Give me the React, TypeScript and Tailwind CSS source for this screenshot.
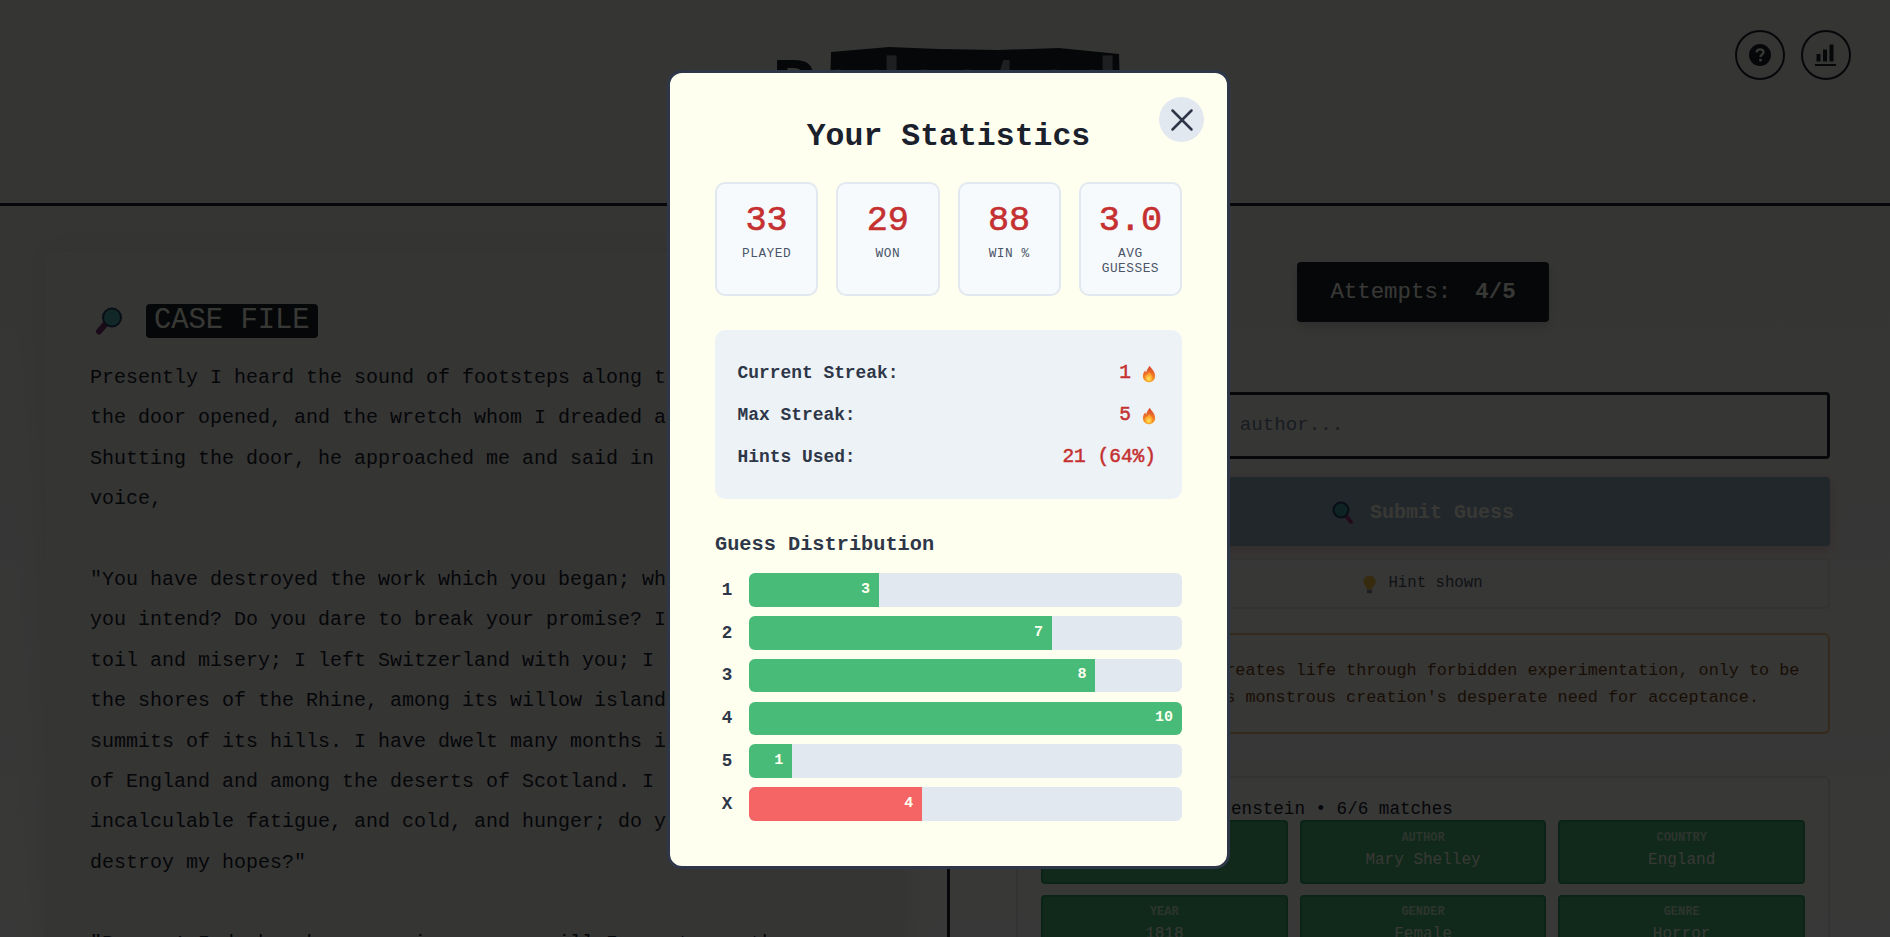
import React from 'react';
import { X } from 'lucide-react';

const mono = 'font-["Liberation_Mono","Courier_New",monospace]';

const Flame = () => (
  <svg width="14" height="18" viewBox="0 0 16 20" className="inline-block">
    <defs>
      <linearGradient id="flameOuter" x1="0" y1="0" x2="0" y2="1">
        <stop offset="0" stopColor="#d9432f" />
        <stop offset="0.6" stopColor="#f07a2a" />
        <stop offset="1" stopColor="#f9a825" />
      </linearGradient>
      <radialGradient id="flameInner" cx="0.5" cy="0.75" r="0.65">
        <stop offset="0" stopColor="#ffe25a" />
        <stop offset="1" stopColor="#fb8f1f" />
      </radialGradient>
    </defs>
    <path d="M9 0.5c.6 2.200 2.200 3.200 3.600 5.200 1.600 2.300 2.600 4.600 2.400 7.200-.3 4-3.400 6.600-7 6.600s-7-2.600-7-6.800c0-2.600 1-4.800 2.600-6.600.2 1 .5 1.600 1.200 2.200C5.400 5 7 3 9 .5z" fill="url(#flameOuter)" />
    <path d="M8.500 7.500c.5 1.600 2 2.600 2.900 4.300 1 2 .6 4.200-.9 5.500-.8.700-1.700 1-2.700 1-2.300 0-4.300-1.600-4.300-4.300 0-1.500.6-2.800 1.600-3.800.2.600.4 1 .8 1.300.3-1.600 1.200-2.800 2.600-4z" fill="url(#flameInner)" />
  </svg>
);

// lens on the upper right, handle to the lower left
const MagnifierLeft = () => (
  <svg width="27" height="28" viewBox="0 0 27 28">
    <path d="M10 17.500L4 24.500" stroke="#7a2f6d" strokeWidth="6" strokeLinecap="round" />
    <circle cx="17" cy="10.500" r="9" fill="#4fb3b7" stroke="#26415f" strokeWidth="2" />
  </svg>
);

// lens on the upper left, handle to the lower right
const MagnifierRight = () => (
  <svg width="22" height="24" viewBox="0 0 22 24">
    <path d="M14 15l5 6" stroke="#a03a78" strokeWidth="4" strokeLinecap="round" />
    <circle cx="9" cy="9" r="7.500" fill="#3f9ea3" stroke="#26415f" strokeWidth="2" />
  </svg>
);

const Bulb = () => (
  <svg width="13" height="19" viewBox="0 0 14 20">
    <path d="M7 .5a6.500 6.500 0 0 0-3.500 12l.6 2.500h5.800l.6-2.500A6.500 6.500 0 0 0 7 .5z" fill="#f6c244" />
    <rect x="4.200" y="15.500" width="5.600" height="4" rx="1" fill="#8a8f98" />
  </svg>
);

const HelpIcon = () => (
  <svg width="24" height="24" viewBox="0 0 24 24">
    <circle cx="12" cy="12" r="11" fill="currentColor" />
    <path d="M8.600 9.300c.2-1.900 1.600-3 3.500-3 2 0 3.400 1.200 3.400 2.800 0 2.500-3 2.500-3 4.900" fill="none" stroke="#fffff0" strokeWidth="2.300" />
    <rect x="11.200" y="15.800" width="2.600" height="2.600" rx="0.600" fill="#fffff0" />
  </svg>
);

const ChartIcon = () => (
  <svg width="22" height="22" viewBox="0 0 22 22" fill="currentColor">
    <rect x="1.500" y="10" width="4" height="7.500" />
    <rect x="8" y="5.500" width="4" height="12" />
    <rect x="14.500" y="0.500" width="4" height="17" />
    <rect x="0" y="20" width="21" height="2" />
  </svg>
);

const statBoxes = [
  { value: '33', label: 'PLAYED' },
  { value: '29', label: 'WON' },
  { value: '88', label: 'WIN %' },
  { value: '3.0', label: 'AVG GUESSES' },
];

const distribution = [
  { key: '1', count: 3, pct: 30 },
  { key: '2', count: 7, pct: 70 },
  { key: '3', count: 8, pct: 80 },
  { key: '4', count: 10, pct: 100 },
  { key: '5', count: 1, pct: 10 },
  { key: 'X', count: 4, pct: 40, fail: true },
];

const passage = `Presently I heard the sound of footsteps along the passage;
the door opened, and the wretch whom I dreaded appeared.
Shutting the door, he approached me and said in a smothered
voice,

"You have destroyed the work which you began; what is it that
you intend? Do you dare to break your promise? I have endured
toil and misery; I left Switzerland with you; I crept along
the shores of the Rhine, among its willow islands and over the
summits of its hills. I have dwelt many months in the heaths
of England and among the deserts of Scotland. I have endured
incalculable fatigue, and cold, and hunger; do you dare
destroy my hopes?"

"Begone! I do break my promise; never will I create another
like yourself, equal in deformity and wickedness."`;

const clues = [
  { label: 'TITLE', value: 'Frankenstein' },
  { label: 'AUTHOR', value: 'Mary Shelley' },
  { label: 'COUNTRY', value: 'England' },
  { label: 'YEAR', value: '1818' },
  { label: 'GENDER', value: 'Female' },
  { label: 'GENRE', value: 'Horror' },
];

const StatsModal = () => (
  <div className="fixed inset-0 z-50 flex items-center justify-center bg-[rgba(0,0,0,0.78)]">
    <div className={`relative mt-[2px] ml-[7px] w-[563px] rounded-[15px] border-[3px] border-[#2d3748] bg-[#fffff0] px-[45px] pt-[46px] pb-[45px] ${mono}`}>
      <button className="absolute top-[24px] right-[23px] flex h-[45px] w-[45px] items-center justify-center rounded-full bg-[#e2e8f0] text-[#2d3748]">
        <X size={38} strokeWidth={1.6} />
      </button>
      <h2 className="text-center text-[31.500px] leading-[36px] font-bold text-[#1a202c]">Your Statistics</h2>

      <div className="mt-[27px] grid grid-cols-4 gap-[18px]">
        {statBoxes.map((s) => (
          <div key={s.label} className="h-[114px] rounded-[10px] border-2 border-[#e2e8f0] bg-[#f7fafc] px-2 pt-[19px] text-center">
            <div className="text-[35.200px] leading-[36px] text-[#c53030] [-webkit-text-stroke:0.6px_#c53030]">{s.value}</div>
            <div className="mt-[7px] text-[12.800px] leading-[15px] tracking-[0.5px] text-[#4a5568]">{s.label}</div>
          </div>
        ))}
      </div>

      <div className="mt-[34px] flex flex-col gap-[21px] rounded-[10px] bg-[#edf2f7] pt-[33px] pr-[26px] pb-[31px] pl-[22.500px]">
        {[
          { label: 'Current Streak:', value: '1', flame: true },
          { label: 'Max Streak:', value: '5', flame: true },
          { label: 'Hints Used:', value: '21 (64%)', flame: false },
        ].map((row) => (
          <div key={row.label} className="flex h-[21px] items-center justify-between">
            <span className="text-[17.900px] font-bold text-[#2d3748]">{row.label}</span>
            <span className="flex items-center gap-[11px] text-[19.500px] text-[#c53030] [-webkit-text-stroke:0.5px_#c53030]">
              {row.value}
              {row.flame && <Flame />}
            </span>
          </div>
        ))}
      </div>

      <h3 className="mt-[34px] text-[20.300px] leading-[24px] font-bold text-[#2d3748]">Guess Distribution</h3>
      <div className="mt-[16px] flex flex-col gap-[9.200px]">
        {distribution.map((d) => (
          <div key={d.key} className="flex items-center gap-[10px]">
            <span className="w-[24px] text-center text-[17.600px] font-bold text-[#2d3748]">{d.key}</span>
            <div className="h-[33.600px] flex-1 overflow-hidden rounded-[6px] bg-[#e2e8f0]">
              <div
                className={`flex h-full items-center justify-end pr-[9px] text-[15px] font-bold text-[#fffff0] ${d.fail ? 'bg-[#f56565]' : 'bg-[#48bb78]'}`}
                style={{ width: `${d.pct}%` }}
              >
                {d.count}
              </div>
            </div>
          </div>
        ))}
      </div>
    </div>
  </div>
);

export default function App() {
  return (
    <div className={`h-[937px] overflow-hidden bg-[#f0f0ec] text-[#1a202c] ${mono}`}>
      <header className="relative h-[206px] border-b-[3px] border-[#1a202c] pt-[49px] text-center">
        <h1 className="text-[72px] leading-[80px] font-bold">
          R
          <span className="relative inline-block">
            {/* marker scribble over the hidden part of the title */}
            <svg width="292" height="80" viewBox="0 0 292 80" className="absolute -top-[3px] left-[14px]">
              <path d="M2 6L60 1L110 3L170 4L230 2L290 8L292 80L0 80Z" fill="#1a202c" />
            </svg>
            <span className="relative text-[#8a8f96]">edacted</span>
          </span>
        </h1>
        <div className="absolute top-[30px] right-[39px] flex gap-[16px]">
          <button className="flex h-[50px] w-[50px] items-center justify-center rounded-full border-2 border-[#1a202c]">
            <HelpIcon />
          </button>
          <button className="flex h-[50px] w-[50px] items-center justify-center rounded-full border-2 border-[#1a202c]">
            <ChartIcon />
          </button>
        </div>
      </header>

      <main className="flex h-[731px] items-start bg-linear-to-b from-[#f0f0ec] to-[#fffffc]">
        <section className="ml-[45px] mt-[46px] h-[700px] w-[860px] shrink-0 bg-[#f2f2ee] pl-[45px] pt-[52px] shadow-[0_0_30px_rgba(0,0,0,0.08)]">
          <div className="flex items-center gap-[24px]">
            <span className="ml-[5px]">
              <MagnifierLeft />
            </span>
            <span className="rounded-[4px] bg-[#1a202c] px-[8px] py-[3px] text-[28.800px] leading-[28px] text-[#fffff0]">CASE FILE</span>
          </div>
          <p className="mt-[20px] whitespace-pre-line text-[20px] leading-[40.400px] text-[#1a202c]">{passage}</p>
        </section>

        <div className="ml-[42px] h-[731px] w-[3px] bg-[#1a202c]" />

        <section className="ml-[66px] flex w-[814px] shrink-0 flex-col">
          <div className="mt-[56px] flex justify-center">
            <div className="flex h-[60px] w-[252px] items-center justify-center rounded-[4px] bg-[#1a202c] pt-[1px] text-[22.400px] text-[#fffff0] shadow-[0_4px_10px_rgba(0,0,0,0.15)]">
              Attempts:<span className="ml-[24px] font-bold">4/5</span>
            </div>
          </div>

          <div className="mt-[70px] flex h-[67px] items-center rounded-[4px] border-[3px] border-[#1a202c] pl-[25px] text-[19.200px] text-[#718096]">
            Enter a title or author...
          </div>

          <button className="mt-[18px] flex h-[69px] items-center justify-center gap-[16px] rounded-[4px] bg-[#9bb1c3] pt-[3px] text-[20px] font-bold text-[#fffff0] shadow-[0_4px_12px_rgba(197,48,48,0.25)]">
            <MagnifierRight />
            Submit Guess
          </button>

          <div className="mt-[12px] flex h-[51px] items-center justify-center gap-[12px] rounded-[4px] border-2 border-[#e6e6dc] pt-[1px] text-[15.700px] text-[#4a5568]">
            <Bulb />
            Hint shown
          </div>

          <div className="mt-[24px] h-[101px] rounded-[6px] border-2 border-[#ecbf7a] pt-[22px] pl-[26px] text-[16.800px] leading-[27px] text-[#744210]">
            A driven student creates life through forbidden experimentation, only to be
            <br />
            then haunted by his monstrous creation's desperate need for acceptance.
          </div>

          <div className="mt-[42px] rounded-[6px] border-2 border-[#e6e6ee] px-[23px] pt-[21px]">
            <div className="text-[17.600px] leading-[20px]">Attempt 4/5: Frankenstein • 6/6 matches</div>
            <div className="mt-[1px] grid grid-cols-3 gap-x-[12px] gap-y-[11px]">
              {clues.map((c) => (
                <div key={c.label} className="flex h-[63.500px] flex-col items-center justify-center rounded-[4px] border-2 border-[#38a169] bg-[#48bb78] pb-[3px] text-[#fffff0]">
                  <span className="text-[12px] leading-[16px] font-bold opacity-70">{c.label}</span>
                  <span className="mt-[3px] text-[16px] leading-[22px]">{c.value}</span>
                </div>
              ))}
            </div>
          </div>
        </section>
      </main>

      <StatsModal />
    </div>
  );
}
